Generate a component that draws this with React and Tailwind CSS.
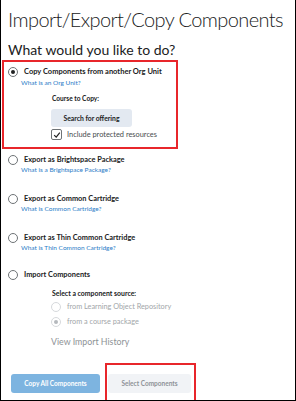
import React from "react";

function Radio({ checked, light }) {
  return (
    <span
      className={`inline-flex items-center justify-center w-[10px] h-[10px] rounded-full border shrink-0 ${
        light ? "border-[#d6d9dc] bg-white" : "border-[#6e7376] bg-white"
      }`}
    >
      {checked && (
        <span className={`w-[4px] h-[4px] rounded-full ${light ? "bg-[#b5b9bd]" : "bg-[#202122]"}`} />
      )}
    </span>
  );
}

function Option({ label, link, className = "" }) {
  return (
    <div className={`flex flex-col ${className}`}>
      <div className="flex items-center gap-[6px] pl-[7px] h-[10px]">
        <Radio />
        <span className="text-[7.4px] leading-[10px] font-bold text-[#202122] whitespace-nowrap">{label}</span>
      </div>
      {link && (
        <span className="text-[6.5px] leading-[9px] text-[#2a7cc7] pl-[20px] whitespace-nowrap">{link}</span>
      )}
    </div>
  );
}

export default function App() {
  return (
    <div
      className="w-[296px] h-[401px] bg-white border-l border-r border-b border-black overflow-hidden"
      style={{ fontFamily: "Lato, 'Open Sans', sans-serif" }}
    >
      <div className="pl-[7px] pt-[7px] text-[20px] tracking-[-0.6px] font-light text-[#202122] leading-[24px] whitespace-nowrap">
        Import/Export/Copy Components
      </div>
      <div className="pl-[7px] mt-[11px] text-[14px] text-[#202122] leading-[16px] whitespace-nowrap">
        What would you like to do?
      </div>

      <div className="ml-[1px] mt-[2px] w-[176px] h-[89px] border-2 border-[#e8262b]">
        <div className="flex items-center gap-[6px] pl-[4px] mt-[5px] h-[10px]">
          <Radio checked />
          <span className="text-[7.5px] leading-[10px] font-bold text-[#202122] whitespace-nowrap">
            Copy Components from another Org Unit
          </span>
        </div>
        <div className="text-[6.5px] leading-[9px] text-[#2a7cc7] pl-[17px] mt-[1px] whitespace-nowrap">
          What is an Org Unit?
        </div>
        <div className="pl-[48px] mt-[7px] text-[6.6px] leading-[9px] font-bold text-[#202122] whitespace-nowrap">
          Course to Copy:
        </div>
        <div className="ml-[47px] mt-[6px] w-[81px] h-[18px] rounded-[3px] bg-[#e3e9f1] flex items-center justify-center text-[6.8px] font-bold text-[#202122] whitespace-nowrap">
          Search for offering
        </div>
        <div className="flex items-center gap-[5px] ml-[47px] mt-[2px] h-[11px]">
          <span className="w-[11px] h-[11px] rounded-[2px] border border-[#6e7376] flex items-center justify-center shrink-0">
            <svg width="8" height="8" viewBox="0 0 8 8">
              <path d="M1.2 4.2 L3.2 6.2 L6.8 1.6" fill="none" stroke="#202122" strokeWidth="1.2" />
            </svg>
          </span>
          <span className="text-[7.4px] leading-[11px] text-[#494c4e] whitespace-nowrap">Include protected resources</span>
        </div>
      </div>

      <Option className="mt-[6px]" label="Export as Brightspace Package" link="What is a Brightspace Package?" />
      <Option className="mt-[20px]" label="Export as Common Cartridge" link="What is Common Cartridge?" />
      <Option className="mt-[20px]" label="Export as Thin Common Cartridge" link="What is Thin Common Cartridge?" />

      <Option className="mt-[18px]" label="Import Components" />
      <div className="pl-[51px] mt-[9px] text-[6.9px] leading-[9px] font-bold text-[#202122] whitespace-nowrap">
        Select a component source:
      </div>
      <div className="flex items-center gap-[6px] pl-[50px] mt-[4px] h-[10px]">
        <Radio light />
        <span className="text-[7.3px] leading-[10px] text-[#a2a6a9] whitespace-nowrap">from Learning Object Repository</span>
      </div>
      <div className="flex items-center gap-[6px] pl-[50px] mt-[5px] h-[10px]">
        <Radio light checked />
        <span className="text-[7.3px] leading-[10px] text-[#a2a6a9] whitespace-nowrap">from a course package</span>
      </div>
      <div className="pl-[50px] mt-[9px] text-[8.8px] leading-[12px] text-[#8e9296] whitespace-nowrap">View Import History</div>

      <div className="flex items-start mt-[15px] pl-[10px]">
        <div className="mt-[11px] w-[89px] h-[19px] rounded-[3px] bg-[#7db4e0] flex items-center justify-center text-[6.5px] font-bold text-white whitespace-nowrap shrink-0">
          Copy All Components
        </div>
        <div className="ml-[5px] w-[91px] h-[40px] border-2 border-[#e8262b] pt-[9px] pl-[1px] shrink-0">
          <div className="w-[83px] h-[19px] rounded-[3px] bg-[#f1f3f6] flex items-center justify-center text-[6.5px] font-bold text-[#8e9296] whitespace-nowrap">
            Select Components
          </div>
        </div>
      </div>
    </div>
  );
}
